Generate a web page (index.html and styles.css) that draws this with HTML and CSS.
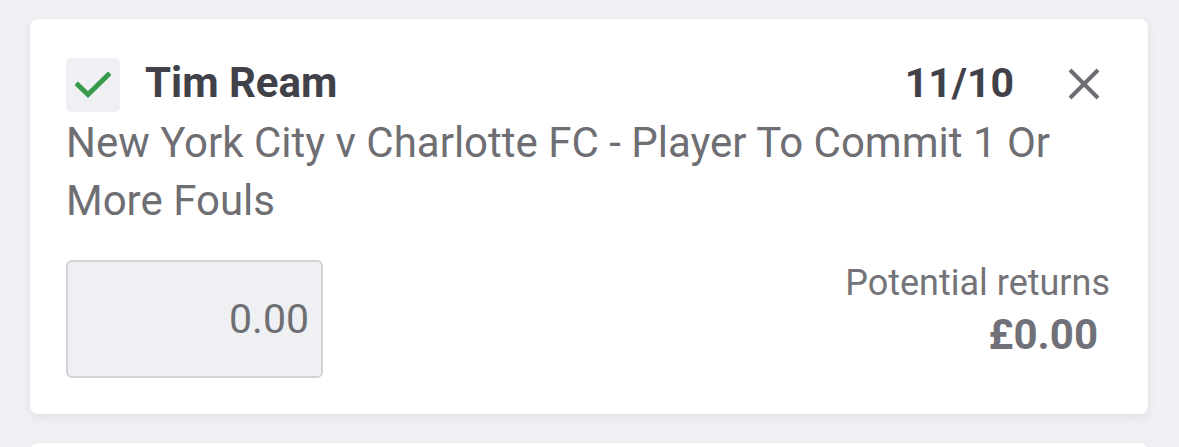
FILE: index.html
```html
<!DOCTYPE html>
<html>
<head>
<meta charset="utf-8">
<link rel="stylesheet" href="styles.css">
</head>
<body>
<div class="page">
  <div class="card">
    <div class="head">
      <div class="check">
        <svg width="36" height="26" viewBox="0 0 36 26"><path d="M3 13 L13 22.5 L33 3" fill="none" stroke="#369b4b" stroke-width="5" stroke-linecap="square"/></svg>
      </div>
      <div class="name">Tim Ream</div>
      <div class="odds">11/10</div>
      <div class="close">
        <svg width="32" height="32" viewBox="0 0 32 32"><path d="M2 2 L30 30 M30 2 L2 30" stroke="#6e6e74" stroke-width="4"/></svg>
      </div>
    </div>
    <div class="desc">New York City v Charlotte FC - Player To Commit 1 Or More Fouls</div>
    <div class="bottom">
      <div class="stake">0.00</div>
      <div class="returns">
        <div class="ret-label">Potential returns</div>
        <div class="ret-value">£0.00</div>
      </div>
    </div>
  </div>
  <div class="card next"></div>
</div>
</body>
</html>
```

FILE: styles.css
```css
html, body {
  margin: 0;
  padding: 0;
  background: #f0f0f4;
  font-family: Roboto, "Liberation Sans", sans-serif;
  overflow: hidden;
}
.page {
  padding: 19px 31px 0 30px;
  display: flex;
  flex-direction: column;
  gap: 29px;
}
.card {
  background: #fff;
  border-radius: 8px;
  box-shadow: 0 3px 10px rgba(0, 0, 0, 0.07);
  padding: 39px 38px 36px 36px;
}
.card.next {
  padding: 0;
  height: 40px;
}
.head {
  display: flex;
  align-items: center;
  height: 54px;
}
.check {
  width: 54px;
  height: 54px;
  border-radius: 5px;
  background: #eff0f4;
  display: flex;
  align-items: center;
  justify-content: center;
  flex: none;
}
.name {
  margin-left: 25px;
  font-size: 42px;
  font-weight: 700;
  color: #41414a;
  flex: 1;
  margin-bottom: 5px;
}
.odds {
  font-size: 41px;
  font-weight: 700;
  color: #41414a;
  margin-bottom: 5px;
}
.close {
  margin-left: 54px;
  margin-right: 10px;
  width: 32px;
  height: 32px;
  margin-top: -2px;
}
.close svg { display: block; }
.desc {
  font-size: 42px;
  line-height: 58px;
  color: #6e6e73;
  margin-top: 2px;
  padding-right: 40px;
}
.bottom {
  display: flex;
  justify-content: space-between;
  align-items: flex-start;
  margin-top: 30px;
}
.stake {
  width: 257px;
  height: 118px;
  box-sizing: border-box;
  border: 2px solid #d3d3d6;
  border-radius: 6px;
  background: #eff0f4;
  display: flex;
  align-items: center;
  justify-content: flex-end;
  padding-right: 12px;
  font-size: 41px;
  color: #6e6e73;
}
.returns {
  display: flex;
  flex-direction: column;
  align-items: flex-end;
}
.ret-label {
  font-size: 36px;
  color: #737378;
  line-height: 44px;
  margin-top: 1px;
}
.ret-value {
  font-size: 42px;
  font-weight: 700;
  color: #707078;
  margin-right: 12px;
  margin-top: 5px;
}
```
